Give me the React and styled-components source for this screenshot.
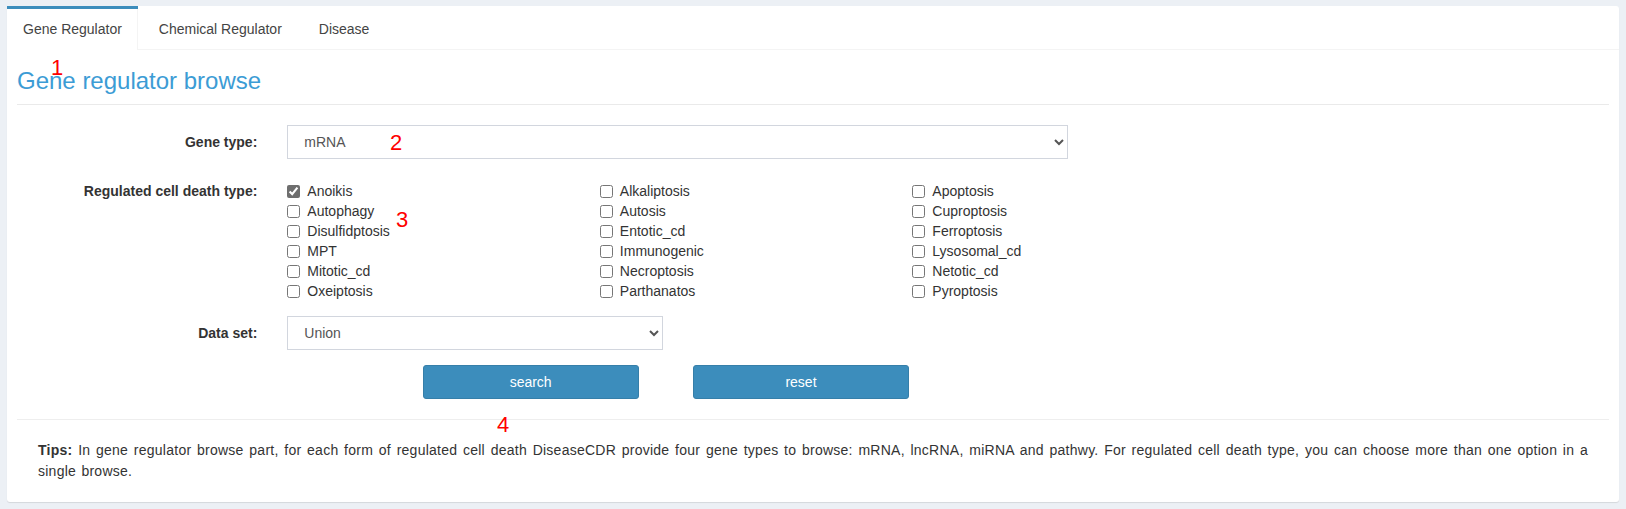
import React from "react";
import styled, { createGlobalStyle } from "styled-components";

const GlobalStyle = createGlobalStyle`
  html, body { margin: 0; padding: 0; }
  body {
    background: #ecf0f5;
    font-family: "Liberation Sans", Arial, Helvetica, sans-serif;
    font-size: 14px;
    line-height: 20px;
    color: #333;
  }
  * { box-sizing: border-box; }
`;

const Page = styled.div`
  padding: 6px 7px 7px;
`;

const Card = styled.div`
  position: relative;
  background: #fff;
  border-radius: 3px;
  box-shadow: 0 1px 1px rgba(0, 0, 0, 0.1);
`;

const TabBar = styled.ul`
  display: flex;
  margin: 0;
  padding: 0;
  list-style: none;
  border-bottom: 1px solid #f4f4f4;
`;

const Tab = styled.li`
  margin: 0 5px -1px 0;
  border-top: 3px solid ${(p) => (p.$active ? "#3c8dbc" : "transparent")};
  background: ${(p) => (p.$active ? "#fff" : "transparent")};
`;

const TabLink = styled.a`
  display: block;
  padding: 10px 15px 11px;
  line-height: 20px;
  color: #444;
  text-decoration: none;
  border-left: 1px solid transparent;
  border-right: 1px solid ${(p) => (p.$active ? "#f4f4f4" : "transparent")};
  cursor: pointer;
`;

const TabContent = styled.div`
  padding: 10px;
`;

const Title = styled.h3`
  margin: 8px 0 0;
  padding-bottom: 10px;
  font-size: 24px;
  line-height: 26px;
  font-weight: normal;
  color: #3c9cd5;
  border-bottom: 1px solid #eaeaea;
`;

const Form = styled.form`
  margin-top: 20px;
`;

const FormRow = styled.div`
  display: grid;
  grid-template-columns: repeat(12, 1fr);
  margin: 0 -15px ${(p) => (p.$last ? "0" : "15px")};
`;

const Label = styled.label`
  grid-column: span 2;
  padding: 7px 15px 0;
  text-align: right;
  font-weight: bold;
  line-height: 20px;
  color: #333;
`;

const Field = styled.div`
  grid-column: ${(p) => (p.$start ? `${p.$start} / ` : "")}span ${(p) => p.$span};
  padding: 0 15px;
`;

const Select = styled.select`
  width: 100%;
  height: 34px;
  padding: 6px 12px;
  border: 1px solid #d2d6de;
  border-radius: 0;
  background: #fff;
  color: #555;
  font-family: inherit;
  font-size: 14px;
`;

const CheckGrid = styled.div`
  grid-column: span 10;
  padding: 7px 15px 0;
  display: grid;
  grid-template-columns: repeat(3, 312.5px);
  grid-template-rows: repeat(6, 20px);
  grid-auto-flow: column;
`;

const CheckItem = styled.label`
  display: flex;
  align-items: center;
  gap: 7px;
  height: 20px;
  line-height: 20px;
  color: #333;
  cursor: pointer;
`;

const Checkbox = styled.input.attrs({ type: "checkbox" })`
  margin: 0;
  width: 13px;
  height: 13px;
  accent-color: #6e6e6e;
`;

const Button = styled.button`
  width: 90%;
  height: 34px;
  background: #3c8dbc;
  border: 1px solid #367fa9;
  border-radius: 3px;
  color: #fff;
  font-family: inherit;
  font-size: 14px;
  cursor: pointer;
`;

const Divider = styled.hr`
  margin: 20px 0;
  border: 0;
  border-top: 1px solid #eee;
`;

const Tips = styled.p`
  margin: 0 0 10px;
  padding: 0 21px;
  line-height: 21px;
  color: #333;
  text-align: justify;
  letter-spacing: 0.25px;
  word-spacing: 1.2px;
`;

const Mark = styled.span`
  position: absolute;
  left: ${(p) => p.$x}px;
  top: ${(p) => p.$y}px;
  font-size: 22px;
  line-height: 22px;
  color: #ff0000;
  pointer-events: none;
`;

const deathTypes = [
  "Anoikis", "Autophagy", "Disulfidptosis", "MPT", "Mitotic_cd", "Oxeiptosis",
  "Alkaliptosis", "Autosis", "Entotic_cd", "Immunogenic", "Necroptosis", "Parthanatos",
  "Apoptosis", "Cuproptosis", "Ferroptosis", "Lysosomal_cd", "Netotic_cd", "Pyroptosis",
];

export default function App() {
  const [checked, setChecked] = React.useState({ Anoikis: true });
  const tabs = ["Gene Regulator", "Chemical Regulator", "Disease"];
  return (
    <>
      <GlobalStyle />
      <Page>
        <Card>
          <TabBar>
            {tabs.map((t, i) => (
              <Tab key={t} $active={i === 0}>
                <TabLink $active={i === 0}>{t}</TabLink>
              </Tab>
            ))}
          </TabBar>
          <TabContent>
            <Title>Gene regulator browse</Title>
            <Form onSubmit={(e) => e.preventDefault()}>
              <FormRow>
                <Label>Gene type:</Label>
                <Field $span={6}>
                  <Select defaultValue="mRNA">
                    <option>mRNA</option>
                    <option>lncRNA</option>
                    <option>miRNA</option>
                    <option>pathwy</option>
                  </Select>
                </Field>
              </FormRow>
              <FormRow>
                <Label>Regulated cell death type:</Label>
                <CheckGrid>
                  {deathTypes.map((d) => (
                    <CheckItem key={d}>
                      <Checkbox
                        checked={!!checked[d]}
                        onChange={() => setChecked((c) => ({ ...c, [d]: !c[d] }))}
                      />
                      {d}
                    </CheckItem>
                  ))}
                </CheckGrid>
              </FormRow>
              <FormRow>
                <Label>Data set:</Label>
                <Field $span={3}>
                  <Select defaultValue="Union">
                    <option>Union</option>
                    <option>Intersection</option>
                  </Select>
                </Field>
              </FormRow>
              <FormRow $last>
                <Field $start={4} $span={2}>
                  <Button type="submit">search</Button>
                </Field>
                <Field $start={6} $span={2}>
                  <Button type="button" onClick={() => setChecked({ Anoikis: true })}>reset</Button>
                </Field>
              </FormRow>
            </Form>
            <Divider />
            <Tips>
              <b>Tips:</b> In gene regulator browse part, for each form of regulated cell death DiseaseCDR provide four gene types to browse: mRNA, lncRNA, miRNA and pathwy. For regulated cell death type, you can choose more than one option in a single browse.
            </Tips>
          </TabContent>
          <Mark $x={44} $y={51}>1</Mark>
          <Mark $x={383} $y={126}>2</Mark>
          <Mark $x={389} $y={203}>3</Mark>
          <Mark $x={490} $y={408}>4</Mark>
        </Card>
      </Page>
    </>
  );
}
